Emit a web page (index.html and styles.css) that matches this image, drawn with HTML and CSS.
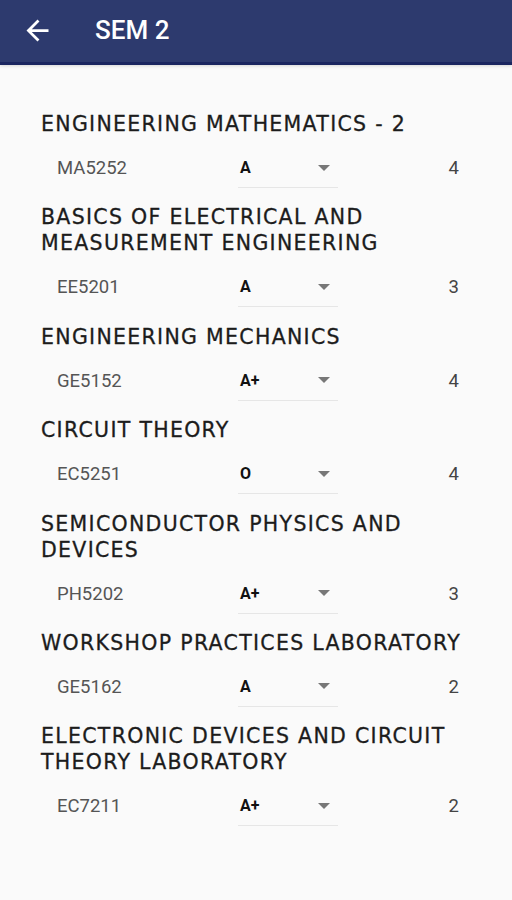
FILE: index.html
```html
<!DOCTYPE html>
<html lang="en">
<head>
  <meta charset="UTF-8">
  <meta name="viewport" content="width=device-width, initial-scale=1.0">
  <title>SEM 2</title>
  <link rel="stylesheet" href="styles.css">
</head>
<body>
  <div class="app-bar">
    <svg class="back" width="33" height="33" viewBox="0 0 24 24"><path d="M20 11H7.83l5.59-5.59L12 4l-8 8 8 8 1.41-1.41L7.83 13H20v-2z" fill="#fff"/></svg>
    <div class="app-title">SEM 2</div>
  </div>

  <div class="subjects">
    <div class="subject">
      <div class="subject-name">ENGINEERING MATHEMATICS - 2</div>
      <div class="subject-row">
        <div class="code">MA5252</div>
        <div class="grade"><span>A</span><i class="caret"></i></div>
        <div class="credits">4</div>
      </div>
    </div>
    <div class="subject">
      <div class="subject-name">BASICS OF ELECTRICAL AND MEASUREMENT ENGINEERING</div>
      <div class="subject-row">
        <div class="code">EE5201</div>
        <div class="grade"><span>A</span><i class="caret"></i></div>
        <div class="credits">3</div>
      </div>
    </div>
    <div class="subject">
      <div class="subject-name">ENGINEERING MECHANICS</div>
      <div class="subject-row">
        <div class="code">GE5152</div>
        <div class="grade"><span>A+</span><i class="caret"></i></div>
        <div class="credits">4</div>
      </div>
    </div>
    <div class="subject">
      <div class="subject-name">CIRCUIT THEORY</div>
      <div class="subject-row">
        <div class="code">EC5251</div>
        <div class="grade"><span>O</span><i class="caret"></i></div>
        <div class="credits">4</div>
      </div>
    </div>
    <div class="subject">
      <div class="subject-name">SEMICONDUCTOR PHYSICS AND DEVICES</div>
      <div class="subject-row">
        <div class="code">PH5202</div>
        <div class="grade"><span>A+</span><i class="caret"></i></div>
        <div class="credits">3</div>
      </div>
    </div>
    <div class="subject">
      <div class="subject-name">WORKSHOP PRACTICES LABORATORY</div>
      <div class="subject-row">
        <div class="code">GE5162</div>
        <div class="grade"><span>A</span><i class="caret"></i></div>
        <div class="credits">2</div>
      </div>
    </div>
    <div class="subject">
      <div class="subject-name">ELECTRONIC DEVICES AND CIRCUIT THEORY LABORATORY</div>
      <div class="subject-row">
        <div class="code">EC7211</div>
        <div class="grade"><span>A+</span><i class="caret"></i></div>
        <div class="credits">2</div>
      </div>
    </div>
  </div>
</body>
</html>
```

FILE: styles.css
```css
body { margin: 0; background-color: #fafafa; font-family: Roboto, "Noto Sans", sans-serif; height: 900px; }
.app-bar { height: 65px; background-color: #2d3a6e; border-bottom: 3px solid #1b2660; display: flex; align-items: center; box-sizing: border-box; box-shadow: 0 1px 3px rgba(0, 0, 0, 0.15); }
.back { margin-left: 21px; margin-top: -2px; }
.app-title { color: #fff; font-size: 26px; font-weight: 500; margin-left: 41px; margin-top: -2px; }
.subjects { padding: 46px 31px 0 41px; }
.subject { margin-bottom: 16.4px; }
.subject-name { font-family: "DejaVu Sans", sans-serif; font-size: 20.5px; letter-spacing: 1.3px; line-height: 26px; color: #1c1c1c; -webkit-text-stroke: 0.3px #1c1c1c; }
.subject-row { display: flex; align-items: center; height: 40px; margin-top: 11px; font-size: 18.5px; }
.code { width: 181px; padding-left: 16px; color: #555; }
.grade { width: 100px; height: 40px; box-sizing: border-box; border-bottom: 1px solid #e6e6e6; display: flex; align-items: center; justify-content: space-between; padding-left: 2px; padding-right: 8px; color: #111; font-size: 16px; font-weight: 700; }
.caret { width: 0; height: 0; border-left: 6px solid transparent; border-right: 6px solid transparent; border-top: 6px solid #777; }
.credits { flex: 1; text-align: right; color: #444; padding-right: 22px; }
```
